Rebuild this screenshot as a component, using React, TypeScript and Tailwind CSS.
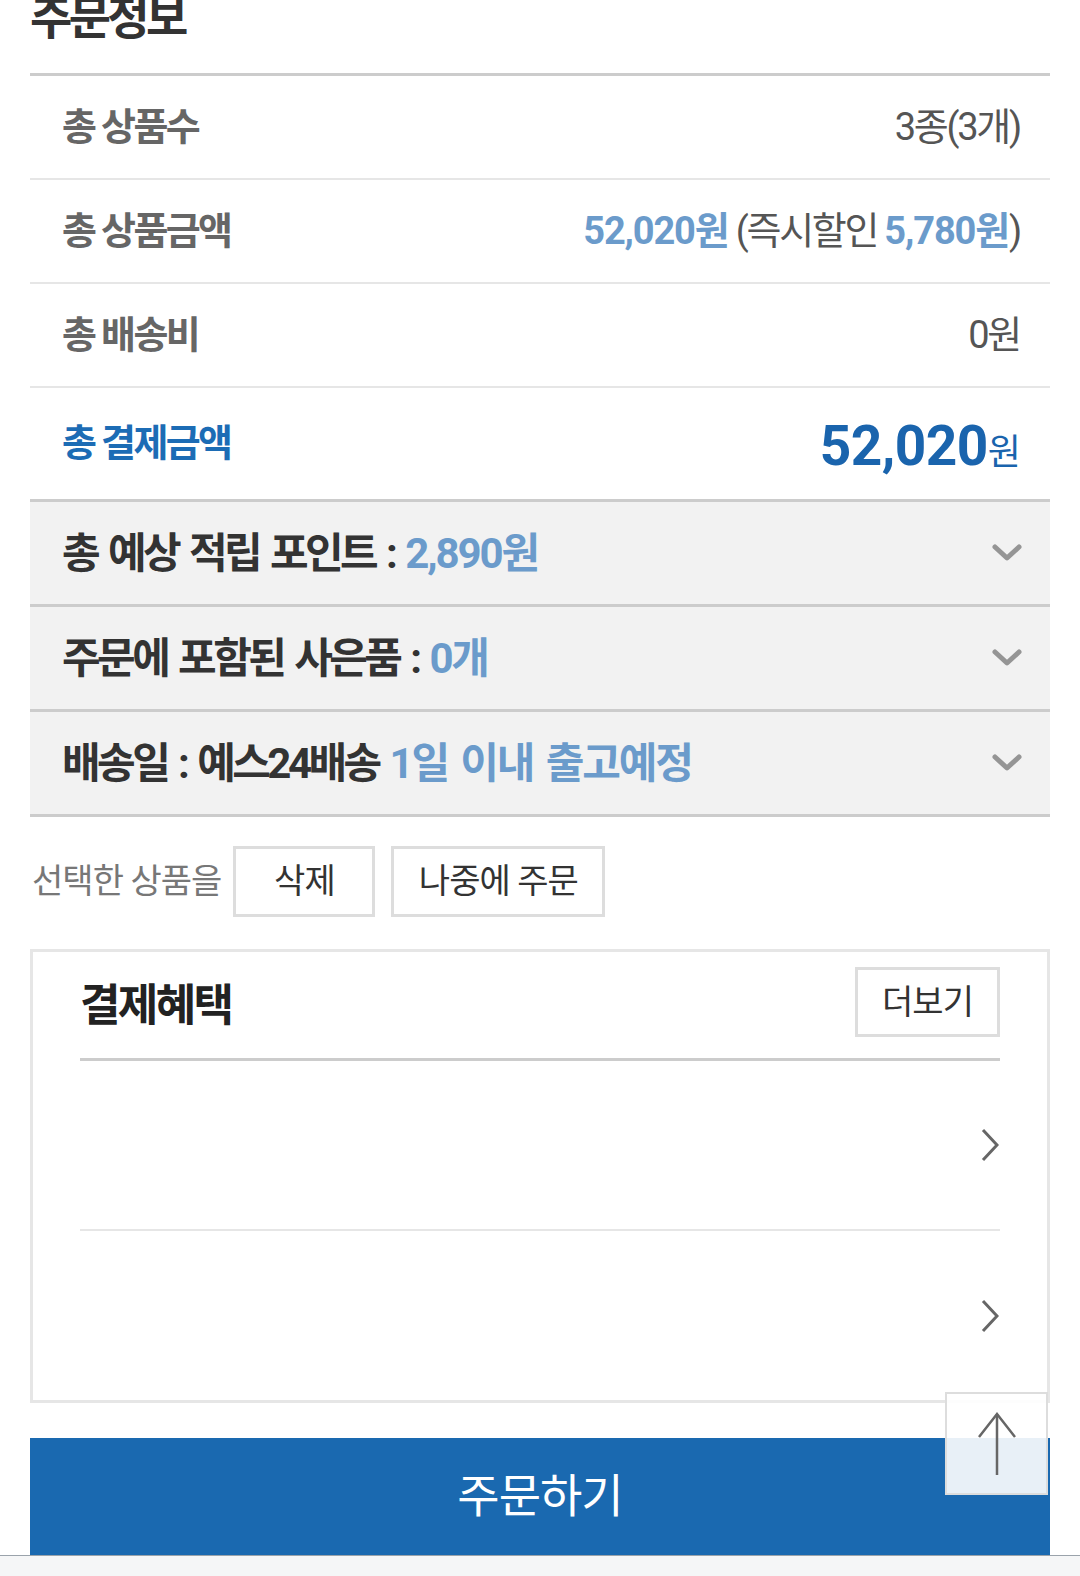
import React from "react";

const ChevronDown = () => (
  <svg width="30" height="18" viewBox="0 0 30 18" fill="none">
    <polyline points="3,3 15,14 27,3" stroke="#959595" strokeWidth="5" strokeLinecap="round" strokeLinejoin="round" />
  </svg>
);

const ChevronRight = () => (
  <svg width="18" height="34" viewBox="0 0 18 34" fill="none">
    <polyline points="2,2 16,17 2,32" stroke="#666" strokeWidth="3" strokeLinejoin="miter" />
  </svg>
);

const ArrowUp = () => (
  <svg width="40" height="64" viewBox="0 0 40 64" fill="none">
    <line x1="20" y1="2" x2="20" y2="63" stroke="#666" strokeWidth="2.5" />
    <polyline points="2,25 20,2 38,25" stroke="#666" strokeWidth="2.5" />
  </svg>
);

const summaryRows = [
  { label: "총 상품수", value: <span className="text-[#555]">3종(3개)</span> },
  {
    label: "총 상품금액",
    value: (
      <span className="text-[#555]">
        <span className="font-bold tracking-[-0.03em] text-[#6b9bcb]">52,020원</span> (즉시할인{" "}
        <span className="font-bold tracking-[-0.03em] text-[#6b9bcb]">5,780원</span>)
      </span>
    ),
  },
  { label: "총 배송비", value: <span className="text-[#555]">0원</span> },
];

const foldRows = [
  {
    label: "총 예상 적립 포인트 : ",
    value: "2,890원",
  },
  {
    label: "주문에 포함된 사은품 : ",
    value: "0개",
  },
  {
    label: "배송일 : 예스24배송 ",
    value: "1일 이내 출고예정",
  },
];

export default function App() {
  return (
    <div className="relative min-h-[1576px] bg-white font-['Roboto','Noto_Sans_CJK_KR',sans-serif] tracking-[-0.06em] overflow-hidden">
      <div className="px-[30px]">
        {/* 주문정보 */}
        <div className="h-[73px] overflow-hidden">
          <h2 className="-mt-[10px] text-[46px] font-bold leading-[56px] tracking-[-0.08em] text-[#333]">주문정보</h2>
        </div>

        <div className="border-t-[3px] border-[#ccc]">
          {summaryRows.map((row) => (
            <div
              key={row.label}
              className="flex h-[104px] items-center justify-between border-b-2 border-[#e6e6e6] pl-[32px] pr-[30px]"
            >
              <span className="text-[38px] font-bold tracking-[-0.07em] text-[#666]">{row.label}</span>
              <span className="text-[38px] tracking-[-0.06em]">{row.value}</span>
            </div>
          ))}
          <div className="flex h-[111px] items-center justify-between pl-[32px] pr-[30px]">
            <span className="text-[38px] font-bold tracking-[-0.07em] text-[#1c6cb5]">총 결제금액</span>
            <span className="pt-[6px] font-bold text-[#1a64ad]">
              <span className="text-[55px] tracking-[-0.01em]">52,020</span>
              <span className="text-[36px] font-normal">원</span>
            </span>
          </div>
        </div>

        {/* 접이식 정보 */}
        <div className="border-t-[3px] border-[#ccc] bg-[#f2f2f2]">
          {foldRows.map((row) => (
            <div
              key={row.label}
              className="flex h-[105px] items-center justify-between border-b-[3px] border-[#ccc] pl-[32px] pr-[28px]"
            >
              <span className="text-[42px] font-bold tracking-[-0.085em] [word-spacing:4px] text-[#333]">
                {row.label}
                <span className="tracking-[-0.05em] text-[#6b9bcb]">{row.value}</span>
              </span>
              <ChevronDown />
            </div>
          ))}
        </div>

        {/* 선택한 상품 */}
        <div className="mt-[29px] flex items-center">
          <span className="pr-[12px] pl-[2px] text-[34px] text-[#777]">선택한 상품을</span>
          <button className="h-[71px] w-[142px] border-[3px] border-[#ddd] bg-white text-[34px] text-[#333]">
            삭제
          </button>
          <button className="ml-[16px] h-[71px] w-[214px] border-[3px] border-[#ddd] bg-white text-[34px] text-[#333]">
            나중에 주문
          </button>
        </div>

        {/* 결제혜택 */}
        <div className="mt-[32px] border-[3px] border-[#e6e6e6] px-[47px]">
          <div className="flex h-[109px] items-start justify-between border-b-[3px] border-[#ccc] pt-[15px]">
            <h3 className="mt-[6px] text-[44px] font-bold tracking-[-0.06em] text-[#222]">결제혜택</h3>
            <button className="h-[70px] w-[145px] border-[3px] border-[#ddd] bg-white text-[34px] text-[#333]">
              더보기
            </button>
          </div>
          <div className="flex h-[170px] items-center justify-end border-b-2 border-[#e6e6e6] pr-[1px]">
            <ChevronRight />
          </div>
          <div className="flex h-[169px] items-center justify-end pr-[1px]">
            <ChevronRight />
          </div>
        </div>

        {/* 주문하기 */}
        <button className="mt-[35px] flex h-[117px] w-full items-center justify-center bg-[#1a69b0] text-[46px] text-white">
          주문하기
        </button>
      </div>

      <div className="h-[24px] border-t border-[#9aa3ab] bg-[#f5f6f7]" />

      {/* 맨 위로 */}
      <button className="absolute left-[945px] top-[1392px] flex h-[103px] w-[103px] items-center justify-center border-2 border-[#ddd] bg-white/90">
        <ArrowUp />
      </button>
    </div>
  );
}
